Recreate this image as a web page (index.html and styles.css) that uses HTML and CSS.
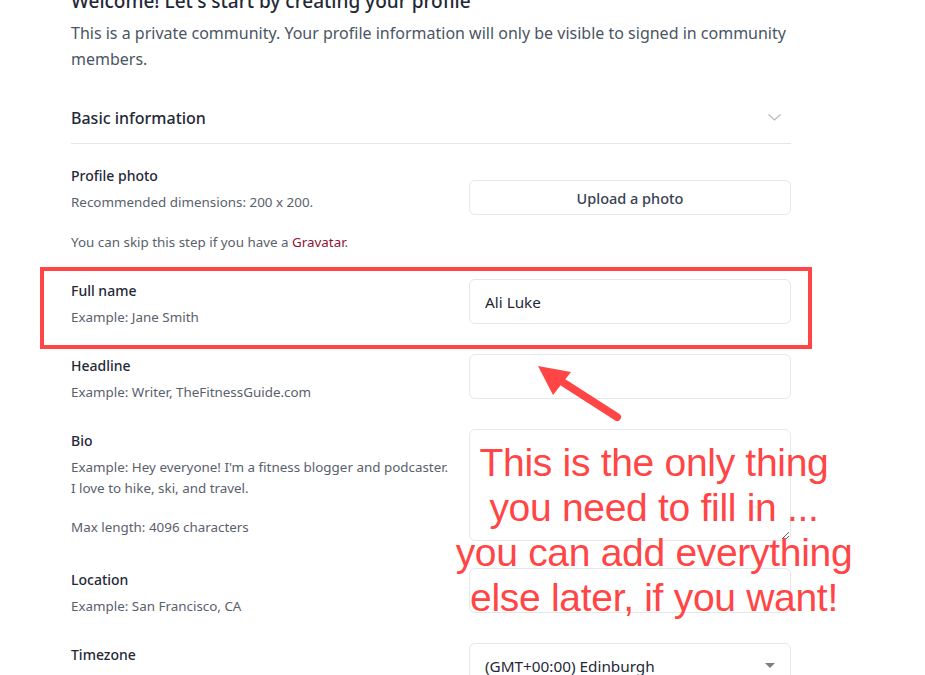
FILE: index.html
```html
<!DOCTYPE html>
<html lang="en">
<head>
<meta charset="utf-8">
<title>Create your profile</title>
<link rel="stylesheet" href="styles.css">
</head>
<body>
<div class="page">
  <main class="wrap">
    <h1 class="title">Welcome! Let's start by creating your profile</h1>
    <p class="intro">This is a private community. Your profile information will only be visible to signed in community members.</p>

    <div class="section-head">
      <span>Basic information</span>
      <svg class="chev" width="13" height="7" viewBox="0 0 13 7"><path d="M0.5 0.5 L6.5 6 L12.5 0.5" fill="none" stroke="#b4bac4" stroke-width="1.2"/></svg>
    </div>

    <div class="form">
      <div class="row">
        <div class="lab">
          <div class="label">Profile photo</div>
          <p class="desc">Recommended dimensions: 200 x 200.</p>
          <p class="desc gap">You can skip this step if you have a <a href="#" class="link">Gravatar</a>.</p>
        </div>
        <div class="ctl"><button class="btn" type="button">Upload a photo</button></div>
      </div>

      <div class="row">
        <div class="lab">
          <div class="label">Full name</div>
          <p class="desc">Example: Jane Smith</p>
        </div>
        <div class="ctl"><input class="field" type="text" value="Ali Luke"></div>
      </div>

      <div class="row">
        <div class="lab">
          <div class="label">Headline</div>
          <p class="desc">Example: Writer, TheFitnessGuide.com</p>
        </div>
        <div class="ctl"><input class="field" type="text" value=""></div>
      </div>

      <div class="row">
        <div class="lab">
          <div class="label">Bio</div>
          <p class="desc bio">Example: Hey everyone! I'm a fitness blogger and podcaster. I love to hike, ski, and travel.</p>
          <p class="desc maxlen">Max length: 4096 characters</p>
        </div>
        <div class="ctl"><textarea class="area"></textarea></div>
      </div>

      <div class="row">
        <div class="lab">
          <div class="label">Location</div>
          <p class="desc">Example: San Francisco, CA</p>
        </div>
        <div class="ctl"><input class="field" type="text" value=""></div>
      </div>

      <div class="row">
        <div class="lab">
          <div class="label">Timezone</div>
        </div>
        <div class="ctl">
          <div class="select"><span>(GMT+00:00) Edinburgh</span><span class="caret"></span></div>
        </div>
      </div>
    </div>
  </main>

  <div class="hl-box"></div>
  <svg class="arrow" width="120" height="80" viewBox="0 0 120 80">
    <line x1="97" y1="67" x2="44" y2="33" stroke="#ff4545" stroke-width="8" stroke-linecap="round"/>
    <polygon points="18,16 51,22 33,45" fill="#ff4545"/>
  </svg>
  <div class="note">This is the only thing<br>you need to fill in ...<br>you can add everything<br>else later, if you want!</div>
</div>
</body>
</html>
```

FILE: styles.css
```css
* { box-sizing: border-box; }

html, body {
  margin: 0;
  padding: 0;
  background: #ffffff;
}

body {
  font-family: "Noto Sans", "Open Sans", sans-serif;
  color: #1f2937;
  overflow: hidden;
  height: 675px;
}

.page {
  position: relative;
  display: flow-root;
  width: 925px;
  height: 675px;
}

.wrap {
  margin-left: 71px;
  width: 720px;
}

.title {
  margin: -13px 0 0;
  font-size: 19px;
  line-height: 28px;
  font-weight: 500;
  color: #1f2937;
}

.intro {
  margin: 5px 0 0;
  font-size: 16px;
  line-height: 26px;
  color: #4b5563;
}

.section-head {
  margin-top: 21px;
  height: 51px;
  display: flex;
  align-items: center;
  justify-content: space-between;
  border-bottom: 1px solid #e5e7eb;
  font-size: 16px;
  font-weight: 500;
  color: #1f2937;
  padding-right: 10px;
}

.chev { display: block; margin-top: -2px; }

.form {
  margin-top: 20px;
  display: flex;
  flex-direction: column;
  gap: 27px;
}

.row {
  display: grid;
  grid-template-columns: 398px 322px;
  align-items: start;
}

.lab {
  padding-top: 2px;
  padding-right: 14px;
}

.label {
  font-size: 14px;
  line-height: 20px;
  font-weight: 500;
  color: #1f2937;
}

.desc {
  margin: 6px 0 0;
  font-size: 13.4px;
  line-height: 20px;
  color: #59616c;
}

.desc.gap { margin-top: 20px; }
.desc.bio { line-height: 21px; }
.desc.maxlen { margin-top: 18px; }

.link {
  color: #8e1537;
  text-decoration: none;
}

.btn {
  display: block;
  width: 100%;
  height: 35px;
  margin-top: 16px;
  background: #ffffff;
  border: 1px solid #e5e7eb;
  border-radius: 6px;
  font-family: inherit;
  font-size: 14.5px;
  font-weight: 500;
  color: #374151;
}

.field {
  display: block;
  width: 100%;
  height: 45px;
  padding: 0 15px;
  border: 1px solid #e5e7eb;
  border-radius: 6px;
  font-family: inherit;
  font-size: 15.3px;
  color: #1f2937;
  background: #ffffff;
  outline: none;
}

.area {
  display: block;
  width: 100%;
  height: 112px;
  border: 1px solid #e5e7eb;
  border-radius: 6px;
  background: #ffffff;
  font-family: inherit;
  outline: none;
}

.select {
  height: 45px;
  border: 1px solid #e5e7eb;
  border-radius: 6px;
  display: flex;
  align-items: center;
  justify-content: space-between;
  padding: 0 15px;
  font-size: 15.3px;
  color: #1f2937;
}

.select span:first-child { margin-top: 1px; }

.caret {
  width: 0;
  height: 0;
  border-left: 5px solid transparent;
  border-right: 5px solid transparent;
  border-top: 5px solid #7a7f87;
}

/* annotations layered over the page */
.hl-box {
  position: absolute;
  left: 40px;
  top: 267px;
  width: 772px;
  height: 82px;
  border: 4px solid #ff4545;
}

.arrow {
  position: absolute;
  left: 520px;
  top: 350px;
}

.note {
  position: absolute;
  left: 404px;
  top: 440px;
  width: 500px;
  text-align: center;
  font-family: "Liberation Sans", Arial, sans-serif;
  font-size: 39px;
  line-height: 45px;
  letter-spacing: -0.3px;
  color: #ff4545;
}
```
